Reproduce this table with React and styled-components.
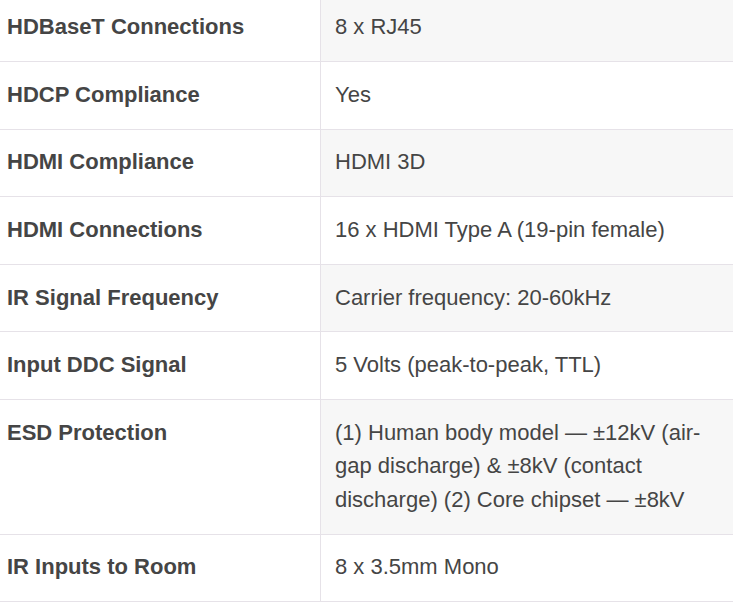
import React from "react";
import styled, { createGlobalStyle } from "styled-components";

const GlobalStyle = createGlobalStyle`
  html, body {
    margin: 0;
    padding: 0;
    background: #ffffff;
    overflow: hidden;
  }
`;

const specs = [
  ["HDBaseT Connections", "8 x RJ45"],
  ["HDCP Compliance", "Yes"],
  ["HDMI Compliance", "HDMI 3D"],
  ["HDMI Connections", "16 x HDMI Type A (19-pin female)"],
  ["IR Signal Frequency", "Carrier frequency: 20-60kHz"],
  ["Input DDC Signal", "5 Volts (peak-to-peak, TTL)"],
  [
    "ESD Protection",
    "(1) Human body model \u2014 \u00b112kV (air-gap discharge) & \u00b18kV (contact discharge) (2) Core chipset \u2014 \u00b18kV",
  ],
  ["IR Inputs to Room", "8 x 3.5mm Mono"],
];

const Wrap = styled.div`
  margin: -6.6px 0 0 -7px;
  width: 740px;
`;

const Table = styled.table`
  width: 100%;
  border-collapse: collapse;
  table-layout: fixed;
  font-family: "Liberation Sans", Arial, sans-serif;
  font-size: 22px;
  line-height: 33.6px;
  color: #454545;
`;

const Row = styled.tr`
  border-top: 1px solid #e6e2e8;
  border-bottom: 1px solid #e6e2e8;
`;

const Label = styled.th`
  width: 299px;
  padding: 15.8px 14px 17.2px;
  text-align: left;
  vertical-align: top;
  font-weight: 700;
  border-right: 1px solid #e6e2e8;
`;

const Value = styled.td`
  padding: 15.8px 14px 17.2px;
  vertical-align: top;
  font-weight: 400;
  background: ${(p) => (p.$shade ? "#f7f7f7" : "#ffffff")};
`;

export default function App() {
  return (
    <>
      <GlobalStyle />
      <Wrap>
        <Table>
          <tbody>
            {specs.map(([label, value], i) => (
              <Row key={label}>
                <Label>{label}</Label>
                <Value $shade={i % 2 === 0}>{value}</Value>
              </Row>
            ))}
          </tbody>
        </Table>
      </Wrap>
    </>
  );
}
